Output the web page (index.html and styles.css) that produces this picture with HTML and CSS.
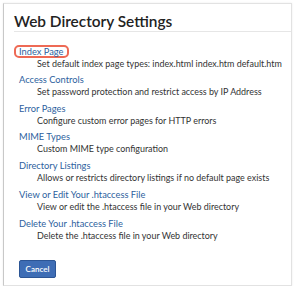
FILE: index.html
```html
<!DOCTYPE html>
<html lang="en">
<head>
  <meta charset="UTF-8">
  <title>Web Directory Settings</title>
  <link rel="stylesheet" href="styles.css">
</head>
<body>
  <div class="panel">
    <h1 class="panel-title">Web Directory Settings</h1>

    <ul class="settings">
      <li class="setting">
        <a class="setting-link highlighted" href="#">Index Page</a>
        <div class="setting-desc">Set default index page types: index.html index.htm default.htm</div>
      </li>
      <li class="setting">
        <a class="setting-link" href="#">Access Controls</a>
        <div class="setting-desc">Set password protection and restrict access by IP Address</div>
      </li>
      <li class="setting">
        <a class="setting-link" href="#">Error Pages</a>
        <div class="setting-desc">Configure custom error pages for HTTP errors</div>
      </li>
      <li class="setting">
        <a class="setting-link" href="#">MIME Types</a>
        <div class="setting-desc">Custom MIME type configuration</div>
      </li>
      <li class="setting">
        <a class="setting-link" href="#">Directory Listings</a>
        <div class="setting-desc">Allows or restricts directory listings if no default page exists</div>
      </li>
      <li class="setting">
        <a class="setting-link" href="#">View or Edit Your .htaccess File</a>
        <div class="setting-desc">View or edit the .htaccess file in your Web directory</div>
      </li>
      <li class="setting">
        <a class="setting-link" href="#">Delete Your .htaccess File</a>
        <div class="setting-desc">Delete the .htaccess file in your Web directory</div>
      </li>
    </ul>

    <button class="cancel-button">Cancel</button>
  </div>
</body>
</html>
```

FILE: styles.css
```css
* {
  margin: 0;
  padding: 0;
  box-sizing: border-box;
}

body {
  font-family: Lato, 'Open Sans', sans-serif;
  background: #fff;
  color: #333;
  padding: 3px 5px 0 3px;
}

.panel {
  width: 289px;
  height: 283px;
  border: 1px solid #e2e2e2;
  border-left: 1px solid #c8c8c8;
  box-shadow: 0 0 2px rgba(0, 0, 0, 0.08);
  padding: 0 0 0 10px;
}

.panel-title {
  font-size: 15.4px;
  font-weight: 600;
  color: #222;
  height: 28px;
  padding-top: 8px;
  line-height: 18px;
  border-bottom: 1px solid #e6e6e6;
}

.settings {
  list-style: none;
  padding-top: 14px;
}

.setting {
  height: 28.8px;
}

.setting-link {
  display: block;
  width: fit-content;
  color: #2d5f9e;
  font-size: 9.3px;
  line-height: 12px;
  text-decoration: none;
  padding: 0 4px 0 5px;
}

.setting-link.highlighted {
  border: 2px solid #ee6a55;
  border-radius: 5px;
  line-height: 9px;
  padding: 0 3px;
  margin-top: -1px;
}

.setting-desc {
  font-size: 8.95px;
  line-height: 12px;
  color: #333;
  padding-left: 23px;
  white-space: nowrap;
}

.cancel-button {
  display: block;
  margin: 13px 0 0 5px;
  width: 37px;
  height: 18px;
  background: #3e6db5;
  border: 1px solid #2c5595;
  border-radius: 2px;
  color: #fff;
  font-family: Lato, sans-serif;
  font-size: 8px;
  font-weight: 600;
}
```
